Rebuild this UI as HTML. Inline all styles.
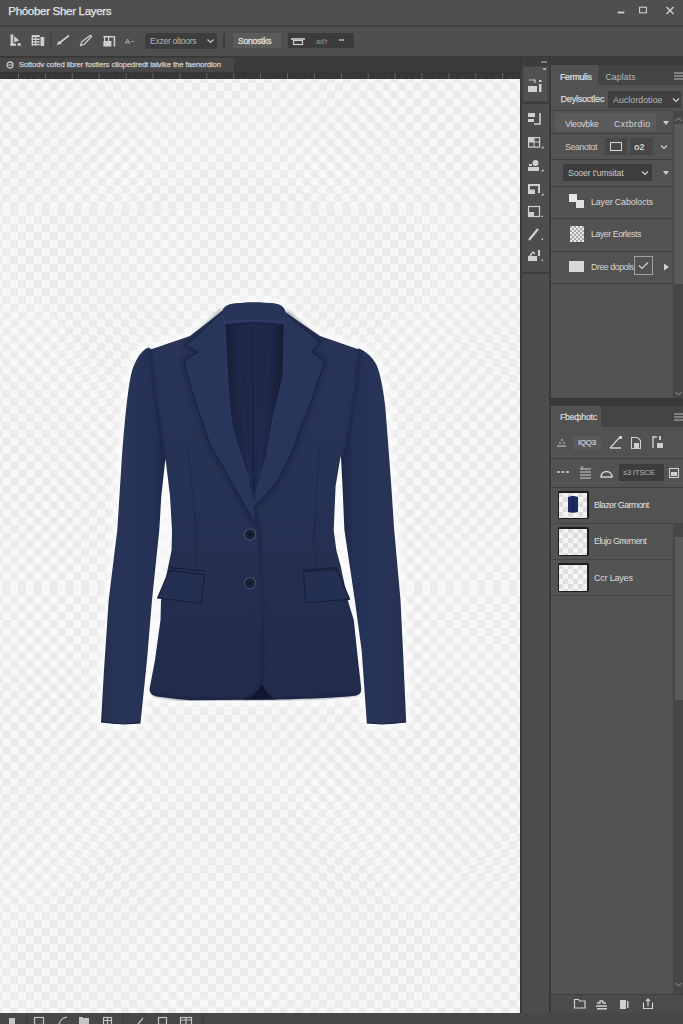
<!DOCTYPE html>
<html><head><meta charset="utf-8"><style>
*{margin:0;padding:0;box-sizing:border-box}
html,body{width:683px;height:1024px;overflow:hidden;background:#4a4a4a;font-family:"Liberation Sans",sans-serif;color:#d8d8d8}
.a{position:absolute}
.t{white-space:nowrap}
svg.a{overflow:visible}
</style></head><body>
<div class="a" style="left:0px;top:0px;width:683px;height:26px;background:#4f4f4f;"></div>
<div class="a" style="left:0px;top:25px;width:683px;height:2px;background:#404040;"></div>
<div class="a t" style="left:8.3px;top:6.07px;font-size:11.5px;line-height:11.5px;color:#e6e6e6;font-weight:normal;letter-spacing:-0.3px;-webkit-text-stroke:0.25px #e6e6e6">Phóober Sher Layers</div>
<svg class="a" style="left:0;top:0" width="683" height="26">
<path d="M617.6,12.5 h6.7" stroke="#d0d0d0" stroke-width="1.8"/>
<rect x="639.6" y="7.2" width="6.8" height="5.6" fill="none" stroke="#d0d0d0" stroke-width="1.1"/>
<path d="M666.5,7 l7,7 M673.5,7 l-7,7" stroke="#d6d6d6" stroke-width="1.3"/>
</svg>
<div class="a" style="left:0px;top:27px;width:683px;height:29px;background:#4f4f4f;"></div>
<div class="a" style="left:0px;top:56px;width:683px;height:2px;background:#383838;"></div>
<svg class="a" style="left:0;top:27px" width="683" height="28" viewBox="0 27 683 28">
<g fill="#cfcfcf">
<rect x="10.6" y="34.3" width="2.6" height="11.5"/><rect x="10.6" y="43.5" width="5.3" height="2.3"/>
<path d="M14.2,35.9 L19.2,40.5 L14.2,42.2 Z"/><rect x="17.5" y="43.2" width="3.3" height="2.6"/>
<rect x="31.7" y="35" width="8" height="2.2"/><rect x="40.5" y="37" width="3.7" height="9"/>
<rect x="31.7" y="38.6" width="8" height="1.4"/><rect x="31.7" y="41.2" width="8" height="1.4"/><rect x="31.7" y="43.8" width="8" height="1.4"/>
<rect x="31.7" y="37" width="1.3" height="9"/><rect x="35.2" y="37" width="1.1" height="9"/>
</g>
<rect x="50" y="32" width="1.2" height="17" fill="#3e3e3e"/>
<path d="M60,42.5 L68.5,35.9" stroke="#cfcfcf" stroke-width="1.8" stroke-linecap="round"/>
<path d="M56.6,45.2 L58.5,41 L62,43.5 Z" fill="#cfcfcf"/>
<path d="M80.3,45.8 L82,41.5 L90.5,35.3 L91.5,36.5 L84.5,44 Z" fill="none" stroke="#cfcfcf" stroke-width="1.2" stroke-linejoin="round"/>
<g fill="#cfcfcf">
<rect x="103.4" y="35.9" width="10" height="1.6"/><rect x="104" y="37" width="1.2" height="4"/><rect x="108" y="37" width="1.2" height="4"/>
<rect x="103.4" y="41" width="8" height="5.5"/><rect x="113.6" y="36" width="1.6" height="10.5"/>
</g>
</svg>
<div class="a t" style="left:125px;top:37.65px;font-size:7.5px;line-height:7.5px;color:#bdbdbd;font-weight:normal;letter-spacing:0px;">A~</div>
<div class="a" style="left:145px;top:33px;width:72px;height:16px;background:#3d3d3d;border-radius:2px"></div>
<div class="a t" style="left:150px;top:37.02px;font-size:8.6px;line-height:8.6px;color:#b4b4b4;font-weight:normal;letter-spacing:-0.3px;">Exzer oltoors</div>
<svg class="a" style="left:206px;top:37px" width="10" height="8"><path d="M1.5,2.5 l3,3 l3,-3" fill="none" stroke="#c8c8c8" stroke-width="1.2"/></svg>
<div class="a" style="left:223px;top:33px;width:2px;height:16px;background:#3e3e3e;"></div>
<div class="a" style="left:233px;top:33px;width:48px;height:15px;background:#5b5b5b;"></div>
<div class="a t" style="left:238px;top:36.72px;font-size:8.6px;line-height:8.6px;color:#dcdcdc;font-weight:normal;letter-spacing:-0.25px;-webkit-text-stroke:0.35px #dcdcdc">Sonostks</div>
<div class="a" style="left:287.5px;top:33px;width:66px;height:15px;background:#3c3c3c;"></div>
<svg class="a" style="left:288px;top:33px" width="66" height="15"><path d="M3,6 h14" stroke="#cfcfcf" stroke-width="1.6"/><rect x="5.5" y="7.5" width="9" height="4" fill="none" stroke="#cfcfcf" stroke-width="1.2"/><rect x="22" y="1" width="1" height="13" fill="#373737"/><rect x="45" y="1" width="1" height="13" fill="#373737"/><path d="M51,7 h5" fill="none" stroke="#bdbdbd" stroke-width="1.4"/></svg>
<div class="a t" style="left:316px;top:38.07px;font-size:7px;line-height:7px;color:#9c9c9c;font-weight:normal;letter-spacing:0px;">ad'r</div>
<div class="a" style="left:0px;top:57px;width:521px;height:15px;background:#3b3b3b;"></div>
<div class="a" style="left:0px;top:58px;width:234px;height:14px;background:#474747;"></div>
<svg class="a" style="left:6px;top:61px" width="9" height="8"><circle cx="4" cy="4" r="3" fill="none" stroke="#c8c8c8" stroke-width="1.3"/><path d="M2,4 h4" stroke="#c8c8c8" stroke-width="1"/></svg>
<div class="a t" style="left:18.7px;top:61.40px;font-size:7.8px;line-height:7.8px;color:#cccccc;font-weight:normal;letter-spacing:-0.13px;-webkit-text-stroke:0.25px #cccccc">Sottodv cofed librer fostiers cllopedredt ialvike the faenordion</div>
<div class="a" style="left:0px;top:72px;width:520px;height:7px;background:#363636;"></div>
<svg class="a" style="left:0;top:0" width="520" height="80"><rect x="18.0" y="76" width="1" height="3" fill="#424242"/><rect x="24.7" y="76" width="1" height="3" fill="#424242"/><rect x="31.4" y="76" width="1" height="3" fill="#424242"/><rect x="38.2" y="76" width="1" height="3" fill="#424242"/><rect x="44.9" y="76" width="1" height="3" fill="#424242"/><rect x="51.6" y="76" width="1" height="3" fill="#424242"/><rect x="58.3" y="76" width="1" height="3" fill="#424242"/><rect x="65.1" y="76" width="1" height="3" fill="#424242"/><rect x="71.8" y="76" width="1" height="3" fill="#424242"/><rect x="78.5" y="76" width="1" height="3" fill="#424242"/><rect x="85.2" y="76" width="1" height="3" fill="#424242"/><rect x="92.0" y="76" width="1" height="3" fill="#424242"/><rect x="98.7" y="76" width="1" height="3" fill="#424242"/><rect x="105.4" y="76" width="1" height="3" fill="#424242"/><rect x="112.1" y="76" width="1" height="3" fill="#424242"/><rect x="118.9" y="76" width="1" height="3" fill="#424242"/><rect x="125.6" y="76" width="1" height="3" fill="#424242"/><rect x="132.3" y="76" width="1" height="3" fill="#424242"/><rect x="139.1" y="76" width="1" height="3" fill="#424242"/><rect x="145.8" y="76" width="1" height="3" fill="#424242"/><rect x="152.5" y="76" width="1" height="3" fill="#424242"/><rect x="159.2" y="76" width="1" height="3" fill="#424242"/><rect x="165.9" y="76" width="1" height="3" fill="#424242"/><rect x="172.7" y="76" width="1" height="3" fill="#424242"/><rect x="179.4" y="76" width="1" height="3" fill="#424242"/><rect x="186.1" y="76" width="1" height="3" fill="#424242"/><rect x="192.8" y="76" width="1" height="3" fill="#424242"/><rect x="199.6" y="76" width="1" height="3" fill="#424242"/><rect x="206.3" y="76" width="1" height="3" fill="#424242"/><rect x="213.0" y="76" width="1" height="3" fill="#424242"/><rect x="219.8" y="76" width="1" height="3" fill="#424242"/><rect x="226.5" y="76" width="1" height="3" fill="#424242"/><rect x="233.2" y="76" width="1" height="3" fill="#424242"/><rect x="239.9" y="76" width="1" height="3" fill="#424242"/><rect x="246.6" y="76" width="1" height="3" fill="#424242"/><rect x="253.4" y="76" width="1" height="3" fill="#424242"/><rect x="260.1" y="76" width="1" height="3" fill="#424242"/><rect x="266.8" y="76" width="1" height="3" fill="#424242"/><rect x="273.5" y="76" width="1" height="3" fill="#424242"/><rect x="280.3" y="76" width="1" height="3" fill="#424242"/><rect x="287.0" y="76" width="1" height="3" fill="#424242"/><rect x="293.7" y="76" width="1" height="3" fill="#424242"/><rect x="300.4" y="76" width="1" height="3" fill="#424242"/><rect x="307.2" y="76" width="1" height="3" fill="#424242"/><rect x="313.9" y="76" width="1" height="3" fill="#424242"/><rect x="320.6" y="76" width="1" height="3" fill="#424242"/><rect x="327.3" y="76" width="1" height="3" fill="#424242"/><rect x="334.1" y="76" width="1" height="3" fill="#424242"/><rect x="340.8" y="76" width="1" height="3" fill="#424242"/><rect x="347.5" y="76" width="1" height="3" fill="#424242"/><rect x="354.2" y="76" width="1" height="3" fill="#424242"/><rect x="361.0" y="76" width="1" height="3" fill="#424242"/><rect x="367.7" y="76" width="1" height="3" fill="#424242"/><rect x="374.4" y="76" width="1" height="3" fill="#424242"/><rect x="381.1" y="76" width="1" height="3" fill="#424242"/><rect x="387.9" y="76" width="1" height="3" fill="#424242"/><rect x="394.6" y="76" width="1" height="3" fill="#424242"/><rect x="401.3" y="76" width="1" height="3" fill="#424242"/><rect x="408.0" y="76" width="1" height="3" fill="#424242"/><rect x="414.8" y="76" width="1" height="3" fill="#424242"/><rect x="421.5" y="76" width="1" height="3" fill="#424242"/><rect x="428.2" y="76" width="1" height="3" fill="#424242"/><rect x="434.9" y="76" width="1" height="3" fill="#424242"/><rect x="441.7" y="76" width="1" height="3" fill="#424242"/><rect x="448.4" y="76" width="1" height="3" fill="#424242"/><rect x="455.1" y="76" width="1" height="3" fill="#424242"/><rect x="461.8" y="76" width="1" height="3" fill="#424242"/><rect x="468.6" y="76" width="1" height="3" fill="#424242"/><rect x="475.3" y="76" width="1" height="3" fill="#424242"/><rect x="482.0" y="76" width="1" height="3" fill="#424242"/><rect x="488.8" y="76" width="1" height="3" fill="#424242"/><rect x="495.5" y="76" width="1" height="3" fill="#424242"/><rect x="502.2" y="76" width="1" height="3" fill="#424242"/><rect x="508.9" y="76" width="1" height="3" fill="#424242"/><rect x="515.6" y="76" width="1" height="3" fill="#424242"/><rect x="522.4" y="76" width="1" height="3" fill="#424242"/><rect x="529.1" y="76" width="1" height="3" fill="#424242"/><rect x="535.8" y="76" width="1" height="3" fill="#424242"/><rect x="542.5" y="76" width="1" height="3" fill="#424242"/><rect x="549.3" y="76" width="1" height="3" fill="#424242"/><rect x="18.0" y="73" width="1" height="6" fill="#626262"/><rect x="44.9" y="73" width="1" height="6" fill="#626262"/><rect x="71.8" y="73" width="1" height="6" fill="#626262"/><rect x="98.7" y="73" width="1" height="6" fill="#626262"/><rect x="125.6" y="73" width="1" height="6" fill="#626262"/><rect x="152.5" y="73" width="1" height="6" fill="#626262"/><rect x="179.4" y="73" width="1" height="6" fill="#626262"/><rect x="206.3" y="73" width="1" height="6" fill="#626262"/><rect x="233.2" y="73" width="1" height="6" fill="#626262"/><rect x="260.1" y="73" width="1" height="6" fill="#626262"/><rect x="287.0" y="73" width="1" height="6" fill="#626262"/><rect x="313.9" y="73" width="1" height="6" fill="#626262"/><rect x="340.8" y="73" width="1" height="6" fill="#626262"/><rect x="367.7" y="73" width="1" height="6" fill="#626262"/><rect x="394.6" y="73" width="1" height="6" fill="#626262"/><rect x="421.5" y="73" width="1" height="6" fill="#626262"/><rect x="448.4" y="73" width="1" height="6" fill="#626262"/><rect x="475.3" y="73" width="1" height="6" fill="#626262"/><rect x="502.2" y="73" width="1" height="6" fill="#626262"/><rect x="529.1" y="73" width="1" height="6" fill="#626262"/></svg>
<div class="a" style="left:0;top:79px;width:520px;height:128.5px;background-color:#f7f7f7;background-image:conic-gradient(#f7f7f7 0 25%,#ebebeb 0 50%,#f7f7f7 0 75%,#ebebeb 0);background-size:15.85px 15.82px;background-position:2.2px 4px"></div>
<div class="a" style="left:0;top:207.5px;width:520px;height:380.5px;background-color:#f7f7f7;background-image:conic-gradient(#f7f7f7 0 25%,#ebebeb 0 50%,#f7f7f7 0 75%,#ebebeb 0);background-size:15.85px 15.82px;background-position:2.2px 8.5px"></div>
<div class="a" style="left:0;top:588px;width:520px;height:425px;background-color:#f7f7f7;background-image:conic-gradient(#f7f7f7 0 25%,#ebebeb 0 50%,#f7f7f7 0 75%,#ebebeb 0);background-size:15.85px 15.82px;background-position:2.2px 0.4px"></div>
<svg class="a" id="blazer" style="left:0;top:0" width="683" height="1024" viewBox="0 0 683 1024">
<defs>
<linearGradient id="gL" x1="0" x2="1" y1="0" y2="0"><stop offset="0" stop-color="#25304f"/><stop offset="0.35" stop-color="#293558"/><stop offset="0.8" stop-color="#243054"/><stop offset="1" stop-color="#1c2543"/></linearGradient>
<linearGradient id="gR" x1="0" x2="1" y1="0" y2="0"><stop offset="0" stop-color="#1c2543"/><stop offset="0.2" stop-color="#243054"/><stop offset="0.65" stop-color="#293558"/><stop offset="1" stop-color="#25304f"/></linearGradient>
<linearGradient id="gB" x1="0" x2="0" y1="0" y2="1"><stop offset="0" stop-color="#293558"/><stop offset="0.5" stop-color="#263254"/><stop offset="1" stop-color="#212b4a"/></linearGradient>
<linearGradient id="gV" x1="0" x2="1" y1="0" y2="0"><stop offset="0" stop-color="#141b32"/><stop offset="0.2" stop-color="#1c2545"/><stop offset="0.5" stop-color="#202a4c"/><stop offset="0.8" stop-color="#1c2545"/><stop offset="1" stop-color="#141b32"/></linearGradient>
<filter id="halo" x="-30%" y="-30%" width="160%" height="160%"><feGaussianBlur stdDeviation="3.5"/></filter>
<filter id="blur1" x="-20%" y="-20%" width="140%" height="140%"><feGaussianBlur stdDeviation="1.1"/></filter>
<filter id="blur2" x="-20%" y="-20%" width="140%" height="140%"><feGaussianBlur stdDeviation="2.2"/></filter>
</defs>
<g filter="url(#halo)" opacity="0.65">
<path d="M148.6,347.6 C141,350 134,362 131,375 C127,394 124,428 121.3,466.7 L117.3,530 L108.7,600 L104,670 L101,722 Q120,725 140.5,723 L147,660 L152,600 L159.3,530 L161.3,496 L165.5,458 L168,420 L166,360 Z" fill="#fff" stroke="#fff" stroke-width="10" stroke-linejoin="round"/>
<path d="M359,348.5 C366,351 373,358 376.6,365 C381,375 384,395 385.4,408 L388.4,447 L391.3,486 L394.2,530 L400.5,600 L403,650.8 L406.2,722 Q386,725 366.8,723 L361.7,650.8 L354.8,600 L344.4,530 L342.5,486 L341,458 L340,400 L342,355 Z" fill="#fff" stroke="#fff" stroke-width="10" stroke-linejoin="round"/>
<path d="M222.3,311 L190,335.9 L150.5,349.5 C152,365 154,380 154.5,388.6 L160.3,427.7 L165.2,459 L166,462.8 L170,496 L172,530 L171.6,550 L168,567.6 L161,600.4 L160.5,620 L155,660 L149.5,689 Q149.5,695 157,696.5 Q175,699 190.5,700.3 L244,699.8 L277,699.5 Q330,698.5 355,695.8 Q361.5,695 361.3,689 L358,660 L353.8,620 L348.5,602.7 L340.4,565 L336.3,550 L333.7,530 L335.6,486 L340.5,457 L344.4,455 L349.3,427.7 L356,388.6 L359,349.5 L320,335.9 L285.7,312.4 C284.5,307 281,304.5 275,303.5 C262,302 246,302 232,303.8 C226,305 223,308 222.3,311 Z" fill="#fff" stroke="#fff" stroke-width="10" stroke-linejoin="round"/>
</g>
<path d="M148.6,347.6 C141,350 134,362 131,375 C127,394 124,428 121.3,466.7 L117.3,530 L108.7,600 L104,670 L101,722 Q120,725 140.5,723 L147,660 L152,600 L159.3,530 L161.3,496 L165.5,458 L168,420 L166,360 Z" fill="url(#gL)"/>
<path d="M359,348.5 C366,351 373,358 376.6,365 C381,375 384,395 385.4,408 L388.4,447 L391.3,486 L394.2,530 L400.5,600 L403,650.8 L406.2,722 Q386,725 366.8,723 L361.7,650.8 L354.8,600 L344.4,530 L342.5,486 L341,458 L340,400 L342,355 Z" fill="url(#gR)"/>
<path d="M222.3,311 L190,335.9 L150.5,349.5 C152,365 154,380 154.5,388.6 L160.3,427.7 L165.2,459 L166,462.8 L170,496 L172,530 L171.6,550 L168,567.6 L161,600.4 L160.5,620 L155,660 L149.5,689 Q149.5,695 157,696.5 Q175,699 190.5,700.3 L244,699.8 L277,699.5 Q330,698.5 355,695.8 Q361.5,695 361.3,689 L358,660 L353.8,620 L348.5,602.7 L340.4,565 L336.3,550 L333.7,530 L335.6,486 L340.5,457 L344.4,455 L349.3,427.7 L356,388.6 L359,349.5 L320,335.9 L285.7,312.4 C284.5,307 281,304.5 275,303.5 C262,302 246,302 232,303.8 C226,305 223,308 222.3,311 Z" fill="url(#gB)"/>
<path d="M150.5,349.5 C152,365 154,380 154.5,388.6 L160.3,427.7 L165.2,459" stroke="#19213c" stroke-width="1.6" fill="none" filter="url(#blur1)" opacity="0.8"/>
<path d="M359,349.5 L356,388.6 L349.3,427.7 L344.4,455" stroke="#19213c" stroke-width="1.6" fill="none" filter="url(#blur1)" opacity="0.8"/>
<path d="M187.4,444 C190,470 194,500 195,519 L197,567" stroke="#1d2745" stroke-width="1" fill="none" opacity="0.7"/>
<path d="M319,449 C317,480 315,520 314,540 L316,567" stroke="#1d2745" stroke-width="1" fill="none" opacity="0.7"/>
<path d="M223.5,312.4 L225.4,330 C227,370 229,400 231.3,420 C234,435 237,445 240.7,455 C244,465 247,474 248.9,481 C251,490 253,497 254,502 C255,497 256,490 257.6,485.6 C260,475 263,465 267,455 C269,445 271,432 272.8,420 C276,405 280,390 282.8,377 C283.5,360 284,340 284,330 L284.5,312.4 C270,306 240,306 223.5,312.4 Z" fill="url(#gV)"/>
<path d="M222.5,313 C223,308 226,305 232,304 C246,302 262,302 276,304 C281,305 284.5,308 285,313 L284.5,325 C265,321.5 243,321.5 224,325 Z" fill="#28345a"/>
<path d="M224,322.5 C245,319.5 265,319.5 284.5,322.5" stroke="#34416b" stroke-width="1" fill="none" opacity="0.8"/>
<path d="M224,325.5 C245,322.5 265,322.5 284.5,325.5" stroke="#161e38" stroke-width="1" fill="none"/>
<path d="M252,326 C252.5,380 253,440 254,490" stroke="#151c35" stroke-width="1" fill="none" opacity="0.8"/>
<path d="M238,330 C240,380 245,440 250,480 M270,330 C268,380 263,430 258,480" stroke="#2b3762" stroke-width="1.2" fill="none" opacity="0.6" filter="url(#blur1)"/>
<path d="M222.3,311 C212,322 198,336 185.5,345 L198.4,352.2 L184.4,361 C190,385 196,405 202,420 C207,437 212,450 218.4,458.6 C224,468 229,477 233.6,485.6 C239,495 244,504 248.9,512.5 L254.7,523" stroke="#121a31" stroke-width="3" fill="none" filter="url(#blur2)" opacity="0.75"/>
<path d="M285.7,312.4 C298,325 310,334 320,341.7 L311,351.7 L324.4,361.6 C321,372 318,380 315.6,388.5 C311,402 307,412 303.2,420 C299,432 295,444 291.5,452.8 C287,462 284,469 279.8,476.2 C274,486 268,492 263.4,497.3 L255.2,505.5" stroke="#121a31" stroke-width="3" fill="none" filter="url(#blur2)" opacity="0.75"/>
<path d="M222.3,311 C212,322 198,336 185.5,345 L198.4,352.2 L184.4,361 C190,385 196,405 202,420 C207,437 212,450 218.4,458.6 C224,468 229,477 233.6,485.6 C239,495 244,504 248.9,512.5 L254.7,523 L254,502 C253,497 251,490 248.9,481 C247,474 244,465 240.7,455 C237,445 234,435 231.3,420 C229,400 227,370 225.4,330 L223.5,312.4 Z" fill="#29365b"/>
<path d="M285.7,312.4 C298,325 310,334 320,341.7 L311,351.7 L324.4,361.6 C321,372 318,380 315.6,388.5 C311,402 307,412 303.2,420 C299,432 295,444 291.5,452.8 C287,462 284,469 279.8,476.2 C274,486 268,492 263.4,497.3 L255.2,505.5 L254.7,523 L254,502 C255,497 256,490 257.6,485.6 C260,475 263,465 267,455 C269,445 271,432 272.8,420 C276,405 280,390 282.8,377 C283.5,360 284,340 284,330 L284.5,312.4 Z" fill="#29365b"/>
<path d="M222.3,311 C212,322 198,336 185.5,345 L198.4,352.2 L184.4,361 C190,385 196,405 202,420 C207,437 212,450 218.4,458.6 C224,468 229,477 233.6,485.6 C239,495 244,504 248.9,512.5 L254.7,523" stroke="#19223f" stroke-width="0.9" fill="none"/>
<path d="M285.7,312.4 C298,325 310,334 320,341.7 L311,351.7 L324.4,361.6 C321,372 318,380 315.6,388.5 C311,402 307,412 303.2,420 C299,432 295,444 291.5,452.8 C287,462 284,469 279.8,476.2 C274,486 268,492 263.4,497.3 L255.2,505.5" stroke="#19223f" stroke-width="0.9" fill="none"/>
<path d="M223.5,312.4 L225.4,330 C227,370 229,400 231.3,420 C234,435 237,445 240.7,455 C244,465 247,474 248.9,481" stroke="#34426e" stroke-width="1.2" fill="none" opacity="0.55"/>
<path d="M284.5,312.4 L284,330 C284,340 283.5,360 282.8,377 C280,390 276,405 272.8,420 C271,432 269,445 267,455" stroke="#34426e" stroke-width="1.2" fill="none" opacity="0.55"/>
<path d="M255.2,505.5 C256,512 257,516 257.6,519.5 C259,530 260,536 260,540 C261,560 262,590 263.3,614.8 L263.3,659.8 C263,675 261,685 257.7,689 C254,694 250,697 244.2,699" stroke="#18203c" stroke-width="1.2" fill="none" filter="url(#blur1)"/>
<path d="M244,699.5 C252,697 258,692 262,684 C265,691 270,697 276,699.5 Z" fill="#10172c"/>
<path d="M169.9,567.6 L205.6,571" stroke="#161d36" stroke-width="1.2"/>
<path d="M169.3,570.5 L204.4,574.6 L200.9,603.3 L157.6,598 Z" fill="#243052" stroke="#161d36" stroke-width="1.1" stroke-linejoin="round"/>
<path d="M302.9,570 L338,567.6" stroke="#161d36" stroke-width="1.2"/>
<path d="M303.5,571.7 L336.8,569.3 L349.7,599.2 L305.8,602.7 Z" fill="#243052" stroke="#161d36" stroke-width="1.1" stroke-linejoin="round"/>
<circle cx="250" cy="534.5" r="5.6" fill="#1a2036" stroke="#414a66" stroke-width="1.3"/>
<circle cx="250" cy="534.5" r="1.3" fill="#0e1220"/>
<circle cx="250" cy="583.2" r="5.6" fill="#1a2036" stroke="#414a66" stroke-width="1.3"/>
<circle cx="250" cy="583.2" r="1.3" fill="#0e1220"/>
<path d="M101,722 Q120,725 140.5,723" stroke="#17203c" stroke-width="1.2" fill="none"/>
<path d="M406.2,722 Q386,725 366.8,723" stroke="#17203c" stroke-width="1.2" fill="none"/>
<path d="M152,694 Q160,697.5 190.5,699.8 L244,699.3 L277,699 Q330,698 358,694.5" stroke="#141b33" stroke-width="2" fill="none" opacity="0.5" filter="url(#blur1)"/>
</svg>

<div class="a" style="left:0px;top:1013px;width:683px;height:11px;background:#474747;"></div>
<svg class="a" style="left:0;top:1013px" width="683" height="11" viewBox="0 1013 683 11">
<g fill="#c4c4c4" stroke="none">
<rect x="9" y="1018" width="6" height="6"/><rect x="79" y="1018" width="10" height="6"/><rect x="79" y="1017" width="4" height="1.5"/>
</g>
<g fill="none" stroke="#c4c4c4" stroke-width="1.2">
<rect x="34.5" y="1017.5" width="9" height="7"/><path d="M59,1024 q2,-6 8,-7"/><rect x="103.5" y="1017.5" width="8" height="7"/><path d="M107.5,1017.5 v7 M103.5,1020.5 h8"/>
<path d="M138,1024 l5,-6"/><rect x="158.5" y="1017.5" width="8" height="7"/><rect x="180.5" y="1017.5" width="11" height="7"/><path d="M180.5,1020 h11 M186,1017.5 v7"/>
</g>
<rect x="26" y="1013" width="1" height="11" fill="#3a3a3a"/><rect x="123" y="1013" width="1" height="11" fill="#3a3a3a"/><rect x="202" y="1013" width="1" height="11" fill="#3a3a3a"/>
</svg>
<div class="a" style="left:520px;top:57px;width:2px;height:956px;background:#393939;"></div>
<div class="a" style="left:522px;top:57px;width:27px;height:956px;background:#4d4d4d;"></div>
<div class="a" style="left:522px;top:57px;width:27px;height:9px;background:#3d3d3d;"></div>
<div class="a" style="left:541px;top:61px;width:6px;height:2px;background:#808080;"></div>
<div class="a" style="left:523px;top:66px;width:25px;height:36px;background:#515151;border:1px solid #454545"></div>
<div class="a" style="left:522px;top:102px;width:27px;height:2px;background:#3d3d3d;"></div>
<div class="a" style="left:522px;top:272px;width:27px;height:2px;background:#3d3d3d;"></div>
<div class="a" style="left:549px;top:57px;width:2px;height:956px;background:#393939;"></div>
<svg class="a" style="left:522px;top:57px" width="27" height="220" viewBox="522 57 27 220"><g fill="#d0d0d0" stroke="#d0d0d0"><rect x="528" y="86" width="9" height="6" stroke="none"/><rect x="539" y="84" width="2.5" height="8" stroke="none"/><rect x="539" y="80" width="2.5" height="2" stroke="none"/><path d="M529,80 h6 v3" fill="none" stroke-width="1.2"/><rect x="543" y="68" width="3" height="2" stroke="none" fill="#aaa"/><rect x="528" y="113" width="7" height="4" stroke="none"/><rect x="528" y="119" width="6" height="3" stroke="none"/><path d="M540,113 v11 h-6" fill="none" stroke-width="1.6"/><rect x="528.6" y="137.6" width="11" height="9.5" fill="none" stroke-width="1.2"/><path d="M528.5,142 h11 M534,137.5 v9.5" fill="none" stroke-width="1"/><rect x="529" y="138" width="5" height="4" stroke="none"/><path d="M541,148.5 l2.5,-2.5 v2.5z" stroke="none"/><rect x="528" y="167" width="11" height="4" stroke="none"/><circle cx="535.5" cy="163" r="3" stroke="none"/><rect x="529" y="164" width="3" height="2" stroke="none"/><path d="M541,171.5 l2.5,-2.5 v2.5z" stroke="none"/><path d="M529,194 v-9 h10 v8" fill="none" stroke-width="2"/><rect x="528" y="189.5" width="7" height="4.5" stroke="none"/><path d="M541,195.5 l2.5,-2.5 v2.5z" stroke="none"/><rect x="528.5" y="206.5" width="11" height="10" fill="none" stroke-width="1.2"/><rect x="529" y="212" width="5" height="4" stroke="none"/><path d="M541,217 l2,-2 v2z" stroke="none"/><path d="M529,240 L538,229" fill="none" stroke-width="2.2"/><path d="M541,240 l2,-2 v2z" stroke="none"/><rect x="528" y="256" width="9" height="5" stroke="none"/><path d="M530,256 l3,-4 l2,2" fill="none" stroke-width="1.4"/><rect x="538" y="250" width="2" height="6" stroke="none"/><path d="M541,261 l2,-2 v2z" stroke="none"/></g></svg>
<div class="a" style="left:551px;top:57px;width:132px;height:956px;background:#525252"></div>
<!-- panel 1 header -->
<div class="a" style="left:551px;top:57px;width:132px;height:8px;background:#3c3c3c"></div>
<div class="a" style="left:598px;top:65px;width:85px;height:20px;background:#444444"></div>
<div class="a t" style="left:560px;top:73px;font-size:8.7px;line-height:8.7px;color:#e2e2e2;font-weight:normal;letter-spacing:-0.2px;-webkit-text-stroke:0.2px #e2e2e2">Fermulis</div>
<div class="a t" style="left:605.5px;top:72.5px;font-size:8.7px;line-height:8.7px;color:#b8b8b8;font-weight:normal;letter-spacing:0.1px">Caplats</div>
<svg class="a" style="left:674px;top:72px" width="9" height="8"><path d="M0,1 h9 M0,4 h9 M0,7 h9" stroke="#bcbcbc" stroke-width="1"/></svg>
<!-- row 1 -->
<div class="a t" style="left:560.5px;top:95.4px;font-size:9.2px;line-height:9.2px;color:#d8d8d8;font-weight:normal;letter-spacing:-0.3px;-webkit-text-stroke:0.25px #d8d8d8">Deylsoctlec</div>
<div class="a" style="left:608px;top:91px;width:73px;height:17px;background:#3f3f3f"></div>
<div class="a t" style="left:613px;top:96px;font-size:8.7px;line-height:8.7px;color:#b8b8b8;letter-spacing:0.1px">Auclordotioe</div>
<svg class="a" style="left:672px;top:97px" width="8" height="6"><path d="M1,1.5 l3,3 l3,-3" fill="none" stroke="#cfcfcf" stroke-width="1.2"/></svg>
<div class="a" style="left:551px;top:110px;width:123px;height:1px;background:#454545"></div>
<!-- row 2 -->
<div class="a" style="left:555px;top:113px;width:101px;height:18px;background:#5a5a5a"></div>
<div class="a t" style="left:565px;top:119.5px;font-size:8.8px;line-height:8.8px;color:#d8d8d8;letter-spacing:-0.3px">Vieovbke</div>
<div class="a t" style="left:614px;top:119.5px;font-size:8.8px;line-height:8.8px;color:#d8d8d8;letter-spacing:0.5px">Cxtbrdio</div>
<svg class="a" style="left:662px;top:120px" width="8" height="6"><path d="M1,1 h6 l-3,4z" fill="#cfcfcf"/></svg>
<div class="a" style="left:551px;top:133px;width:123px;height:1px;background:#3e3e3e"></div>
<!-- row 3 -->
<div class="a t" style="left:565px;top:142.5px;font-size:8.8px;line-height:8.8px;color:#cfcfcf;letter-spacing:-0.4px">Seanotot</div>
<div class="a" style="left:605px;top:138px;width:22px;height:17px;background:#474747"></div>
<svg class="a" style="left:609px;top:141px" width="14" height="11"><rect x="1.5" y="1.5" width="11" height="8" fill="none" stroke="#cfcfcf" stroke-width="1.1"/></svg>
<div class="a" style="left:630px;top:138px;width:23px;height:17px;background:#474747"></div>
<div class="a t" style="left:634px;top:142.5px;font-size:9px;line-height:9px;color:#cfcfcf;font-weight:bold">o2</div>
<svg class="a" style="left:660px;top:144px" width="8" height="6"><path d="M1,1.5 l3,3 l3,-3" fill="none" stroke="#cfcfcf" stroke-width="1.2"/></svg>
<div class="a" style="left:551px;top:159px;width:123px;height:1px;background:#3e3e3e"></div>
<!-- row 4 -->
<div class="a" style="left:563px;top:164px;width:89px;height:17px;background:#3d3d3d"></div>
<div class="a t" style="left:568px;top:168.5px;font-size:8.8px;line-height:8.8px;color:#c8c8c8;letter-spacing:-0.2px">Sooer t'umsitat</div>
<svg class="a" style="left:641px;top:170px" width="8" height="6"><path d="M1,1.5 l3,3 l3,-3" fill="none" stroke="#cfcfcf" stroke-width="1.2"/></svg>
<svg class="a" style="left:662px;top:170px" width="8" height="6"><path d="M1,1 h6 l-3,4z" fill="#cfcfcf"/></svg>
<div class="a" style="left:551px;top:186px;width:123px;height:1px;background:#3e3e3e"></div>
<!-- layer rows -->
<svg class="a" style="left:568px;top:193px" width="18" height="16"><rect x="1" y="1" width="8" height="8" fill="#e8e8e8"/><rect x="8" y="7" width="8" height="8" fill="#e0e0e0"/></svg>
<div class="a t" style="left:591px;top:197.5px;font-size:8.8px;line-height:8.8px;color:#d6d6d6;letter-spacing:-0.1px">Layer Cabolocts</div>
<div class="a" style="left:551px;top:218px;width:123px;height:1px;background:#3e3e3e"></div>
<div class="a" style="left:570px;top:226px;width:14px;height:16px;background-color:#e6e6e6;background-image:conic-gradient(#e6e6e6 0 25%,#a8a8a8 0 50%,#e6e6e6 0 75%,#a8a8a8 0);background-size:4px 4px"></div>
<div class="a t" style="left:591px;top:230px;font-size:8.8px;line-height:8.8px;color:#d6d6d6;letter-spacing:-0.45px">Layer Eorlests</div>
<div class="a" style="left:551px;top:251px;width:123px;height:1px;background:#3e3e3e"></div>
<div class="a" style="left:569px;top:261px;width:15px;height:11px;background:#d8d8d8"></div>
<div class="a t" style="left:591px;top:262.5px;font-size:8.8px;line-height:8.8px;color:#d6d6d6;letter-spacing:-0.45px">Dree dopols</div>
<svg class="a" style="left:634px;top:256px" width="19" height="19"><rect x="0.5" y="0.5" width="18" height="18" fill="none" stroke="#a0a0a0" stroke-width="1"/><path d="M5,9.5 l3,3 l6,-6" fill="none" stroke="#d0d0d0" stroke-width="1.2"/></svg>
<svg class="a" style="left:663px;top:263px" width="8" height="8"><path d="M1,0.5 l5,3.5 l-5,3.5z" fill="#cfcfcf"/></svg>
<div class="a" style="left:551px;top:283px;width:123px;height:1px;background:#3e3e3e"></div>
<!-- scrollbar 1 -->
<div class="a" style="left:673px;top:111px;width:10px;height:287px;background:#464646"></div>
<div class="a" style="left:674px;top:124px;width:9px;height:160px;background:#5a5a5a"></div>
<svg class="a" style="left:675px;top:117px" width="7" height="5"><path d="M0.5,4 l3,-3 l3,3" fill="none" stroke="#999" stroke-width="1"/></svg>
<svg class="a" style="left:675px;top:391px" width="7" height="5"><path d="M0.5,1 l3,3 l3,-3" fill="none" stroke="#999" stroke-width="1"/></svg>
<!-- band -->
<div class="a" style="left:551px;top:398px;width:132px;height:8px;background:#393939"></div>
<!-- panel 2 header -->
<div class="a" style="left:601px;top:406px;width:82px;height:21px;background:#444444"></div>
<div class="a t" style="left:560px;top:413.4px;font-size:8.7px;line-height:8.7px;color:#dcdcdc;font-weight:normal;letter-spacing:-0.2px;-webkit-text-stroke:0.2px #dcdcdc">Fbeфhotc</div>
<svg class="a" style="left:674px;top:413px" width="9" height="8"><path d="M0,1 h9 M0,4 h9 M0,7 h9" stroke="#bcbcbc" stroke-width="1"/></svg>
<!-- tools row -->
<svg class="a" style="left:551px;top:427px" width="132" height="60" viewBox="551 427 132 60"><g fill="#cfcfcf" stroke="#cfcfcf">
<path d="M557,446 h9 M559,443 h2 M563,443 h2 M561,440 h2" stroke-width="1.2" fill="none"/>
<path d="M610,448 l10,-11 M610,448 h11" stroke-width="1.3" fill="none"/><rect x="619" y="436" width="3" height="3" stroke="none"/>
<path d="M631.5,437.5 h6 l3,3 v8 h-9z" fill="none" stroke-width="1.1"/><rect x="634" y="443" width="5" height="5" stroke="none"/>
<path d="M653,436 v12 M653,437 h4" stroke-width="1.4" fill="none"/><rect x="657" y="443" width="6" height="5" stroke="none"/><rect x="659" y="436" width="2" height="4" stroke="none"/>
<path d="M557,472 h12" stroke-width="1.5" stroke-dasharray="3 1.5" fill="none"/>
<path d="M580,469 h11 M580,472 h11 M580,475 h11 M580,478 h11 M582,466 v3" stroke-width="1" fill="none"/>
<path d="M601,477 a5.5,5.5 0 0 1 11,0z" fill="none" stroke-width="1.4"/>
<rect x="669.5" y="468.5" width="9" height="9" fill="none" stroke-width="1.1"/><rect x="671" y="472" width="6" height="4" stroke="none"/>
</g></svg>
<div class="a" style="left:573px;top:435.5px;width:28px;height:14px;background:#595959"></div>
<div class="a t" style="left:578px;top:439px;font-size:8px;line-height:8px;color:#d4d4d4;letter-spacing:-0.3px;-webkit-text-stroke:0.2px #d4d4d4">IQQ3</div>
<div class="a" style="left:551px;top:458px;width:132px;height:1px;background:#3e3e3e"></div>
<div class="a" style="left:618.5px;top:463.5px;width:45px;height:17px;background:#3c3c3c"></div>
<div class="a t" style="left:623px;top:468.5px;font-size:8px;line-height:8px;color:#b4b4b4;letter-spacing:-0.3px">s3 ITSCE</div>
<div class="a" style="left:551px;top:487px;width:132px;height:1px;background:#3e3e3e"></div>
<!-- layers -->
<div class="a" style="left:557.5px;top:491px;width:31px;height:28px;background:#1c1c1c;border-radius:2px"></div>
<div class="a" style="left:559px;top:492.5px;width:28px;height:25px;background-color:#f2f2f2;background-image:conic-gradient(#f4f4f4 0 25%,#dedede 0 50%,#f4f4f4 0 75%,#dedede 0);background-size:10px 10px;background-position:-1px -1px"></div>
<svg class="a" style="left:567px;top:495px" width="12" height="20"><path d="M1,2 q5,-2 10,0 v15 q-5,1.5 -10,0z" fill="#1c2b62"/><path d="M6,1 v16" stroke="#101a44" stroke-width="1"/></svg>
<div class="a t" style="left:594px;top:500.7px;font-size:9px;line-height:9px;color:#e2e2e2;letter-spacing:-0.6px">Blazer Garmont</div>
<div class="a" style="left:551px;top:523px;width:122px;height:1px;background:#444"></div>
<div class="a" style="left:551px;top:524px;width:122px;height:71px;background:#535353"></div>
<div class="a" style="left:557.5px;top:527px;width:31px;height:29px;background:#1c1c1c;border-radius:2px"></div>
<div class="a" style="left:559px;top:528.5px;width:28px;height:26px;background-color:#f2f2f2;background-image:conic-gradient(#f4f4f4 0 25%,#dedede 0 50%,#f4f4f4 0 75%,#dedede 0);background-size:10px 10px;background-position:-1px -1px"></div>
<div class="a t" style="left:594px;top:537.4px;font-size:9px;line-height:9px;color:#dcdcdc;letter-spacing:-0.6px">Elujo Grrement</div>
<div class="a" style="left:551px;top:559px;width:122px;height:1px;background:#464646"></div>
<div class="a" style="left:557.5px;top:563px;width:31px;height:29px;background:#1c1c1c;border-radius:2px"></div>
<div class="a" style="left:559px;top:564.5px;width:28px;height:26px;background-color:#f2f2f2;background-image:conic-gradient(#f4f4f4 0 25%,#dedede 0 50%,#f4f4f4 0 75%,#dedede 0);background-size:10px 10px;background-position:-1px -1px"></div>
<div class="a t" style="left:594px;top:573.9px;font-size:9px;line-height:9px;color:#dcdcdc;letter-spacing:-0.2px">Ccr Layes</div>
<div class="a" style="left:551px;top:595px;width:122px;height:1px;background:#464646"></div>
<!-- scrollbar 2 -->
<div class="a" style="left:673px;top:523px;width:10px;height:471px;background:#464646"></div>
<div class="a" style="left:675px;top:537px;width:8px;height:163px;background:#5a5a5a"></div>
<svg class="a" style="left:675px;top:982px" width="7" height="5"><path d="M0.5,1 l3,3 l3,-3" fill="none" stroke="#999" stroke-width="1"/></svg>
<!-- panel bottom -->
<div class="a" style="left:551px;top:994px;width:132px;height:1px;background:#3e3e3e"></div>
<div class="a" style="left:551px;top:995px;width:132px;height:18px;background:#4b4b4b"></div>
<svg class="a" style="left:551px;top:995px" width="132" height="18" viewBox="551 995 132 18"><g fill="none" stroke="#d0d0d0" stroke-width="1.2">
<path d="M574.5,999.5 h4 l1,1.5 h5.5 v7 h-10.5z"/><path d="M596,1006 h11 M597,1003 h3 v-2 h3 v2 h3" stroke-width="1.3"/><rect x="597" y="1008" width="10" height="1.5" fill="#d0d0d0" stroke="none"/>
<rect x="620" y="1000" width="6" height="9" fill="#d0d0d0" stroke="none"/><rect x="627" y="1001" width="1.5" height="7" fill="#d0d0d0" stroke="none"/>
<path d="M643.5,1002.5 v6 h9 v-6 M648,1006 v-7 M646,1001 l2,-2 l2,2"/>
</g></svg>

</body></html>
